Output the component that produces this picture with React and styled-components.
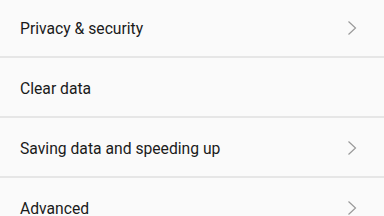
import React from 'react'
import styled, { createGlobalStyle } from 'styled-components'

const GlobalStyle = createGlobalStyle`
  html, body {
    margin: 0;
    padding: 0;
    background: #fafafa;
    overflow: hidden;
  }
`

const items = [
    { label: 'Privacy & security', arrow: true },
    { label: 'Clear data', arrow: false },
    { label: 'Saving data and speeding up', arrow: true },
    { label: 'Advanced', arrow: true },
]

export default function App() {
    return (
        <>
            <GlobalStyle />
            <List>
                {items.map((item) => (
                    <Row key={item.label}>
                        <Label>{item.label}</Label>
                        {item.arrow && (
                            <Chevron viewBox="0 0 10 16" width="10" height="16">
                                <polyline points="1.5,1.5 8.5,8 1.5,14.5" />
                            </Chevron>
                        )}
                    </Row>
                ))}
            </List>
        </>
    )
}

const List = styled.div`
    display: flex;
    flex-direction: column;
    width: 384px;
    margin-top: -2px;
    background: #fafafa;
`

const Row = styled.div`
    display: flex;
    align-items: center;
    justify-content: space-between;
    height: 60px;
    padding: 2px 27px 0 20px;
    box-sizing: border-box;
    border-bottom: 2px solid #e6e6e6;
    flex: 0 0 60px;
`

const Label = styled.span`
    font-family: Roboto, "Noto Sans", sans-serif;
    font-size: 15.7px;
    color: #1a1a1a;
`

const Chevron = styled.svg`
    fill: none;
    stroke: #9a9a9a;
    stroke-width: 1.2;
`
